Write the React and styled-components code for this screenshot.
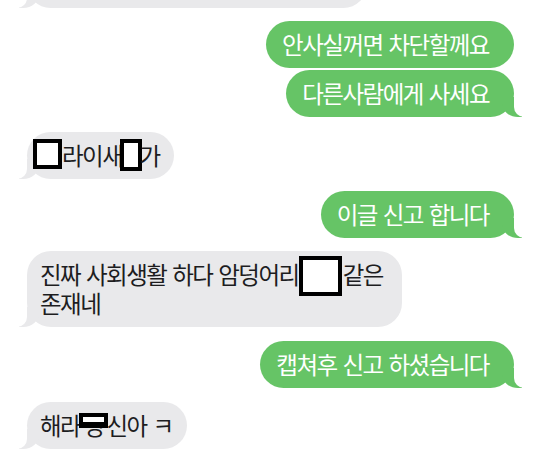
import React from "react";
import styled, { createGlobalStyle, css } from "styled-components";

const GlobalStyle = createGlobalStyle`
  html, body {
    margin: 0;
    padding: 0;
    background: #ffffff;
    overflow: hidden;
  }
  body {
    font-family: "Noto Sans CJK KR", "Noto Sans", sans-serif;
  }
`;

const Thread = styled.div`
  display: flex;
  flex-direction: column;

  width: 538px;
  height: 463px;
  padding: 0 24px 0 27px;
  box-sizing: border-box;

  overflow: hidden;
`;

const Bubble = styled.div`
  position: relative;
  z-index: 0;
  align-self: ${(p) => (p.$mine ? "flex-end" : "flex-start")};

  box-sizing: border-box;
  width: ${(p) => (p.$width ? `${p.$width}px` : "auto")};
  max-width: 375px;
  min-height: 47px;
  margin-top: ${(p) => p.$gap}px;
  padding: ${(p) => (p.$mine ? "9px 25px 9px 16px" : "9px 14px 9px 13px")};

  border-radius: 24px;
  background: ${(p) => (p.$mine ? "#66c466" : "#e9e9eb")};
  color: ${(p) => (p.$mine ? "#ffffff" : "#1d1d1f")};

  font-size: 23.5px;
  line-height: 29px;
  letter-spacing: -1.5px;
  word-spacing: 2px;

  ${(p) =>
    p.$tail &&
    css`
      &::before {
        content: "";
        position: absolute;
        z-index: -1;
        bottom: 0;
        ${p.$mine ? "right: -8px;" : "left: -8px;"}
        width: 20px;
        height: 20px;
        background: ${p.$mine ? "#66c466" : "#e9e9eb"};
        ${p.$mine
          ? "border-bottom-left-radius: 16px 14px;"
          : "border-bottom-right-radius: 16px 14px;"}
      }
      &::after {
        content: "";
        position: absolute;
        z-index: -1;
        bottom: 0;
        ${p.$mine ? "right: -26px;" : "left: -26px;"}
        width: 26px;
        height: 20px;
        background: #ffffff;
        ${p.$mine
          ? "border-bottom-left-radius: 10px;"
          : "border-bottom-right-radius: 10px;"}
      }
    `}
`;

// blank box drawn over a hidden word
const Censor = styled.span`
  display: inline-block;
  box-sizing: border-box;
  vertical-align: baseline;

  width: ${(p) => p.$w}px;
  height: ${(p) => p.$h}px;
  margin: -${(p) => Math.round(p.$h / 2)}px ${(p) => p.$right || 0}px -${(p) =>
      p.$below}px ${(p) => p.$left || 0}px;

  border: 4px solid #000000;
  background: #ffffff;
`;

// hidden syllable with the lower part still showing
const Covered = styled.span`
  position: relative;
  display: inline-block;
  margin: 0 3px 0 3px;

  &::after {
    content: "";
    position: absolute;
    top: 2px;
    left: -4px;
    width: 29px;
    height: 15px;
    box-sizing: border-box;
    border: 4px solid #000000;
    border-bottom-width: 6px;
    background: #ffffff;
  }
`;

const App = () => {
  return (
    <>
      <GlobalStyle />
      <Thread>
        <Bubble $tail $gap={-39} $width={340} />

        <Bubble $mine $gap={13}>
          안사실꺼면 차단할께요
        </Bubble>
        <Bubble $mine $tail $gap={2}>
          다른사람에게 사세요
        </Bubble>

        <Bubble $tail $gap={15}>
          <Censor $w={29} $h={30} $below={4} $left={-7} />
          라이새
          <Censor $w={22} $h={32} $below={6} $left={-2} $right={-3} />가
        </Bubble>

        <Bubble $mine $tail $gap={12}>
          이글 신고 합니다
        </Bubble>

        <Bubble $tail $gap={13}>
          진짜 사회생활 하다 암덩어리
          <Censor $w={43} $h={40} $below={12} $right={1} />
          같은 존재네
        </Bubble>

        <Bubble $mine $tail $gap={14}>
          캡쳐후 신고 하셨습니다
        </Bubble>

        <Bubble $tail $gap={14}>
          해라<Covered>병</Covered>신아 ㅋ
        </Bubble>
      </Thread>
    </>
  );
};

export default App;
